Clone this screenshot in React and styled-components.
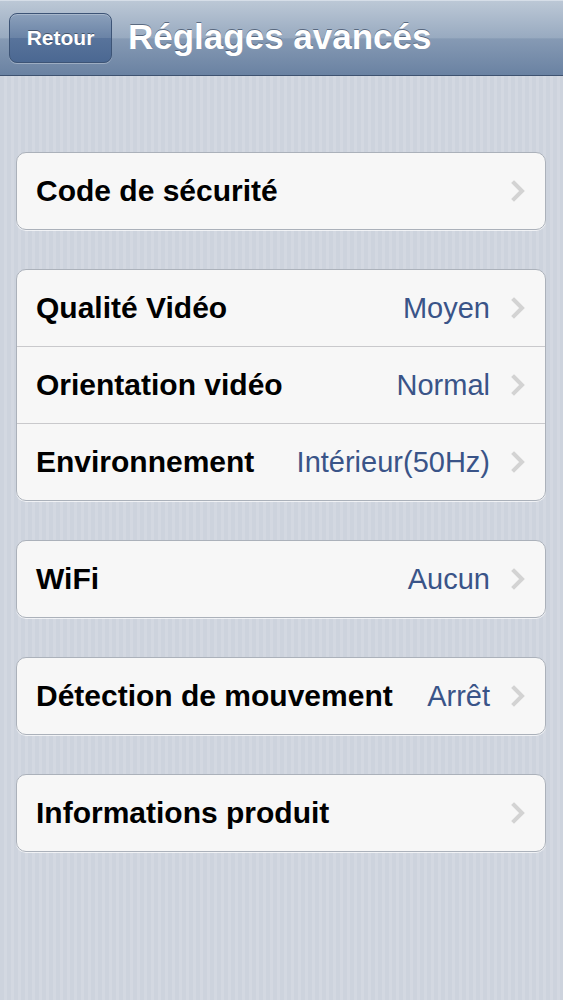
import React from 'react';
import styled, { createGlobalStyle } from 'styled-components';

const GlobalStyle = createGlobalStyle`
  html, body {
    margin: 0;
    padding: 0;
  }
  body {
    font-family: "Liberation Sans", Arial, sans-serif;
    -webkit-font-smoothing: antialiased;
  }
`;

const Screen = styled.div`
  width: 563px;
  min-height: 1000px;
  background-color: #cfd5df;
  background-image: repeating-linear-gradient(
    90deg,
    #cdd3dd 0px,
    #cdd3dd 4px,
    #d3d8e1 4px,
    #d3d8e1 7px
  );
`;

const NavBar = styled.div`
  height: 76px;
  display: flex;
  align-items: center;
  gap: 16px;
  padding: 0 9px;
  box-sizing: border-box;
  background: linear-gradient(180deg, #bcc8d6 0%, #98aac0 50%, #869ab4 51%, #6a82a2 100%);
  border-top: 1px solid #d6dee8;
  border-bottom: 1px solid #3e5270;
`;

const BackButton = styled.button`
  width: 103px;
  height: 50px;
  margin-top: -1px;
  border-radius: 8px;
  border: 1px solid #3d5476;
  background: linear-gradient(180deg, #8ba0bb 0%, #6a83a6 50%, #58739b 51%, #4b6892 100%);
  box-shadow: inset 0 1px 0 rgba(255, 255, 255, 0.25), 0 1px 0 rgba(255, 255, 255, 0.3);
  color: #ffffff;
  font-family: "Liberation Sans", Arial, sans-serif;
  font-size: 21px;
  font-weight: bold;
  text-shadow: 0 -1px 0 rgba(0, 0, 0, 0.4);
  padding: 0;
`;

const Title = styled.h1`
  margin: 0 0 2px;
  color: #ffffff;
  font-size: 35px;
  font-weight: bold;
  text-shadow: 0 -1px 0 rgba(40, 55, 80, 0.6);
`;

const Content = styled.div`
  display: flex;
  flex-direction: column;
  gap: 39px;
  padding: 76px 17px 0 16px;
`;

const Group = styled.div`
  background: #f7f7f7;
  border: 1px solid #abb1ba;
  border-radius: 10px;
  box-shadow: 0 1px 0 rgba(255, 255, 255, 0.7);
  overflow: hidden;
`;

const Row = styled.div`
  height: 76px;
  display: flex;
  align-items: center;
  padding: 0 20px 0 19px;
  border-top: ${(p) => (p.$first ? 'none' : '1px solid #c9c9cc')};
`;

const Label = styled.span`
  flex: 1;
  color: #000000;
  font-size: 30px;
  font-weight: bold;
  white-space: nowrap;
`;

const Value = styled.span`
  color: #3a5488;
  font-size: 29px;
  white-space: nowrap;
`;

const Chevron = styled.svg`
  width: 14px;
  height: 22px;
  margin-left: 21px;
  flex-shrink: 0;
`;

const Arrow = () => (
  <Chevron viewBox="0 0 14 22">
    <path d="M3 3 L11 11 L3 19" fill="none" stroke="#d3d3d3" strokeWidth="4" strokeLinecap="square" strokeLinejoin="miter" />
  </Chevron>
);

const groups = [
  [{ label: 'Code de sécurité' }],
  [
    { label: 'Qualité Vidéo', value: 'Moyen' },
    { label: 'Orientation vidéo', value: 'Normal' },
    { label: 'Environnement', value: 'Intérieur(50Hz)' },
  ],
  [{ label: 'WiFi', value: 'Aucun' }],
  [{ label: 'Détection de mouvement', value: 'Arrêt' }],
  [{ label: 'Informations produit' }],
];

export default function App() {
  return (
    <>
      <GlobalStyle />
      <Screen>
        <NavBar>
          <BackButton>Retour</BackButton>
          <Title>Réglages avancés</Title>
        </NavBar>
        <Content>
          {groups.map((rows, gi) => (
            <Group key={gi}>
              {rows.map((row, ri) => (
                <Row key={row.label} $first={ri === 0}>
                  <Label>{row.label}</Label>
                  {row.value && <Value>{row.value}</Value>}
                  <Arrow />
                </Row>
              ))}
            </Group>
          ))}
        </Content>
      </Screen>
    </>
  );
}
